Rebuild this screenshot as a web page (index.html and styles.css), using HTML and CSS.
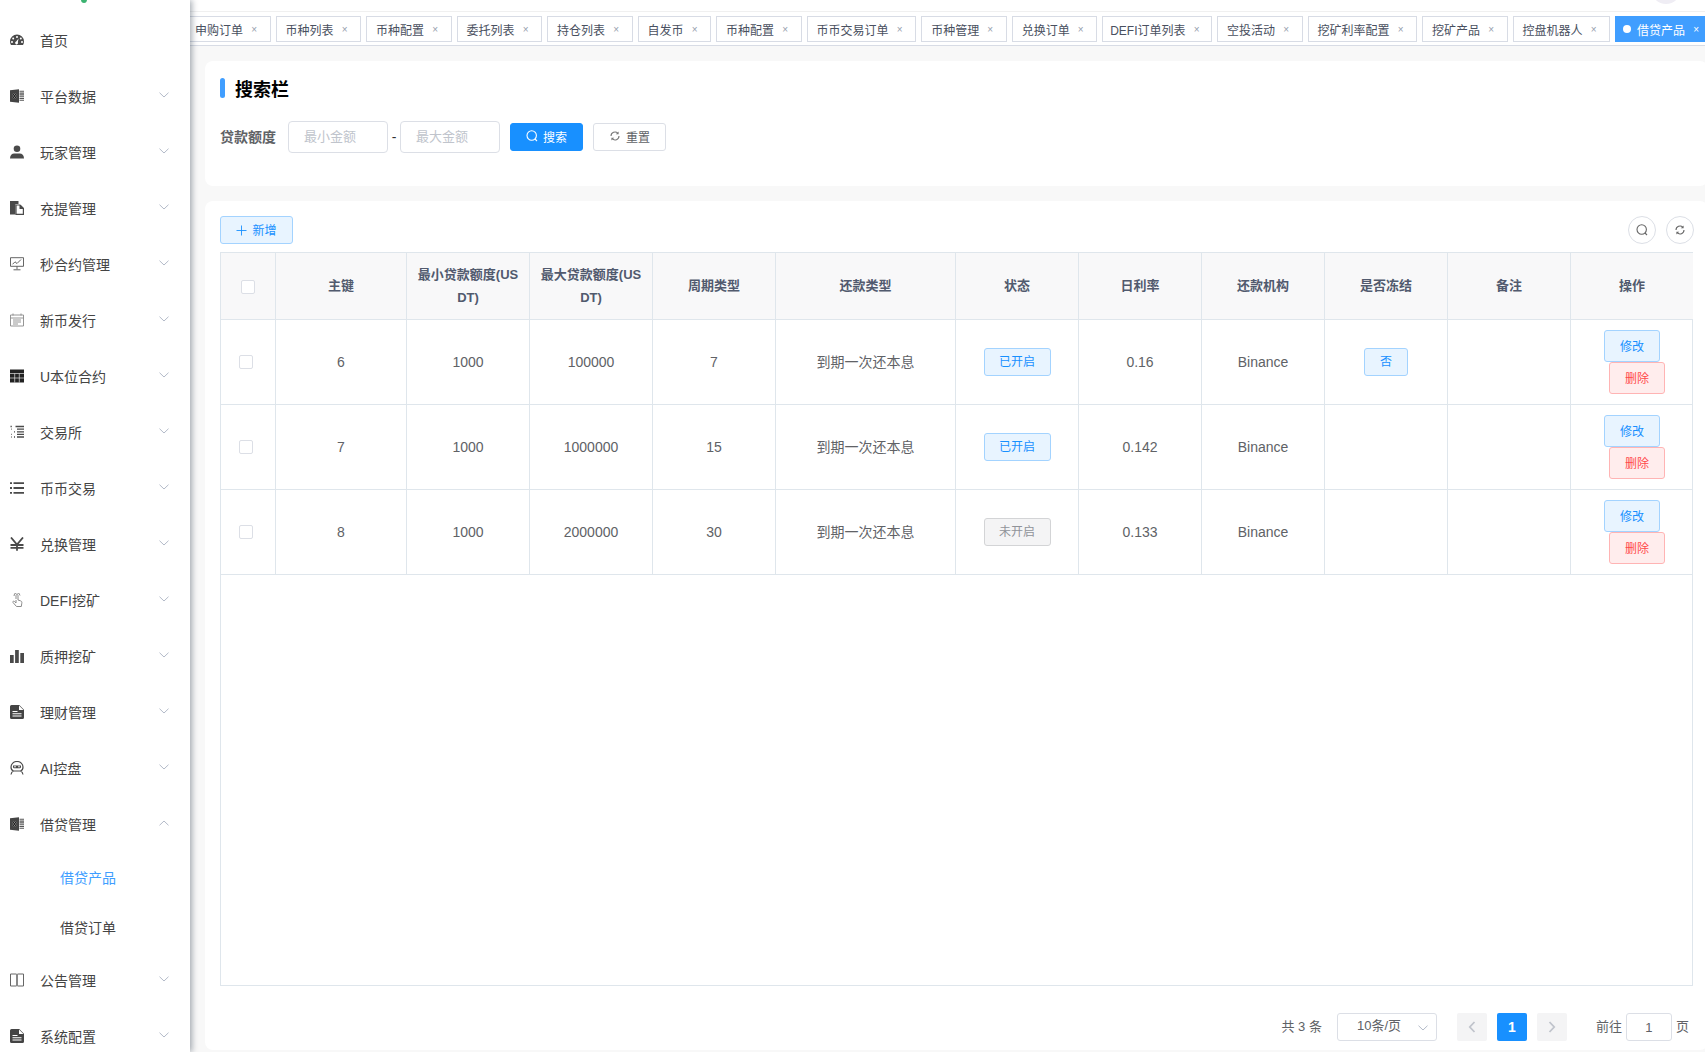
FILE: index.html
```html
<!DOCTYPE html>
<html lang="zh-CN">
<head>
    <meta charset="UTF-8">
    <meta name="viewport" content="width=device-width, initial-scale=1.0">
    <title>借贷产品</title>
    <link rel="stylesheet" href="styles.css">
</head>
<body>

    <!-- shared icons -->
    <svg class="defs" width="0" height="0">
        <symbol id="i-gauge" viewBox="0 0 14 14">
            <path fill="#4a4a4a" fill-rule="evenodd" d="M7 1.500a7 7 0 0 1 7 7c0 1.400-.4 2.600-1 3.500H1c-.6-.9-1-2.100-1-3.500a7 7 0 0 1 7-7zM7 3a1 1 0 1 0 0 2 1 1 0 0 0 0-2zM3.200 4.600a1 1 0 1 0 0 2 1 1 0 0 0 0-2zM10.800 4.600a1 1 0 1 0 0 2 1 1 0 0 0 0-2zM2 8a1 1 0 1 0 0 2 1 1 0 0 0 0-2zM12 8a1 1 0 1 0 0 2 1 1 0 0 0 0-2zM8.600 5.400 6.200 8.600a1.400 1.400 0 1 0 1.600.6z"/>
        </symbol>
        <symbol id="i-excel" viewBox="0 0 14 14">
            <path fill="#444" d="M0 1.300 9 .2v13.600l-9-1.100z"/>
            <path stroke="#a0a0a0" stroke-width="1.800" fill="none" d="M3 5 6 9M6 5 3 9"/>
            <path stroke="#111" stroke-width="1" fill="none" d="M3 5 6 9M6 5 3 9"/>
            <path stroke="#555" stroke-width="1.100" d="M9.500 2.300H14M9.500 4.100H14M9.500 5.900H14M9.500 7.700H14M9.500 9.500H14M9.500 11.300H14"/>
        </symbol>
        <symbol id="i-user" viewBox="0 0 14 14">
            <circle cx="7" cy="3.800" r="3.300" fill="#4a4a4a"/>
            <path fill="#4a4a4a" d="M0 13.500c0-3.200 2-5 4.200-5h5.600c2.200 0 4.200 1.800 4.200 5z"/>
        </symbol>
        <symbol id="i-docs" viewBox="0 0 14 14">
            <path fill="#4a4a4a" d="M0 0h8.500v3H5.500v10.500H0z"/>
            <path fill="#fff" stroke="#4a4a4a" stroke-width="1.200" d="M6 4h4l3.400 3.400v6H6z"/>
            <path fill="#4a4a4a" d="M9.500 4h1.200l3 3v1H9.500z"/>
        </symbol>
        <symbol id="i-screen" viewBox="0 0 14 14">
            <path fill="none" stroke="#555" stroke-width=".9" d="M.5.700h13v8.600H.5zM7 9.300v3M3.500 12.800h7M2.500 7.300l2.500-2.500 2 1.700 4-4"/>
        </symbol>
        <symbol id="i-cal" viewBox="0 0 14 14">
            <path fill="none" stroke="#8a8a8a" stroke-width=".9" d="M.5 2h13v11H.5zM.5 5h13M3 .5v2M11 .5v2M3 7h8M3 9h8M3 11h5"/>
        </symbol>
        <symbol id="i-grid" viewBox="0 0 14 14">
            <path fill="#222" d="M0 .5h14v13H0z"/>
            <path stroke="#fff" stroke-width=".6" d="M0 4.500h14M0 9h14M4.700 4.500v9M9.300 4.500v9"/>
        </symbol>
        <symbol id="i-listdash" viewBox="0 0 14 14">
            <path stroke="#4a4a4a" stroke-width="1.300" stroke-dasharray="1.300 1.300" d="M.5 1.500h2.500M4 6.800h1M4 12h1"/>
            <path stroke="#4a4a4a" stroke-width="1.300" d="M5.500 1.500H14M7 4.200h7M7 6.800h7M7 9.400h7M7 12h7"/>
            <path stroke="#888" stroke-width="1.300" d="M1 4.200h1M1 9.400h1M1 12h1"/>
        </symbol>
        <symbol id="i-list" viewBox="0 0 14 14">
            <path stroke="#4a4a4a" stroke-width="1.800" d="M0 2.200h2M3.500 2.200H14M0 7h2M3.500 7H14M0 11.800h2M3.500 11.800H14"/>
        </symbol>
        <symbol id="i-yen" viewBox="0 0 14 14">
            <path fill="none" stroke="#4a4a4a" stroke-width="1.800" d="M1 .5 7 7.500l6-7M7 7.500v6.300M.5 8h13M.5 10.800h13"/>
        </symbol>
        <symbol id="i-hand" viewBox="0 0 14 14">
            <path fill="none" stroke="#8c8c8c" stroke-width="1" d="M6 6V2.500a1 1 0 0 1 2 0V7l2.500.8c1.200.4 1.500 1.200 1.300 2.400l-.5 3.300H6.500L3 9.500c-.6-1 .6-1.800 1.500-1L6 10V7M4 3a3 3 0 0 1 6-.5"/>
        </symbol>
        <symbol id="i-bars" viewBox="0 0 14 14">
            <path fill="#4a4a4a" d="M0 6h3.700v8H0zM5.100 1h3.700v13H5.100zM10.300 4H14v10h-3.700z"/>
        </symbol>
        <symbol id="i-doc" viewBox="0 0 14 14">
            <path fill="#444" d="M1.500 0h7.800L14 4.700v7.800a1.500 1.500 0 0 1-1.500 1.500h-11A1.500 1.500 0 0 1 0 12.500v-11A1.500 1.500 0 0 1 1.500 0z"/>
            <path stroke="#fff" stroke-width="1.100" d="M2.500 6.500h5M2.500 8.800h9M2.500 11h9"/>
            <path fill="#fff" d="M9 .5V5h4.500z"/>
        </symbol>
        <symbol id="i-robot" viewBox="0 0 14 14">
            <path fill="none" stroke="#4a4a4a" stroke-width="1.200" d="M1 6a6 5.500 0 0 1 12 0c0 2-1 3.600-2.500 4H3.500C2 9.600 1 8 1 6zM1 13.500c.3-2 1-3 2.500-3.500M13 13.500c-.3-2-1-3-2.500-3.500"/>
            <path fill="#4a4a4a" d="M3 4.500h8v1.500a1.300 1.300 0 0 1-1.300 1.300H4.300A1.300 1.300 0 0 1 3 6z"/>
            <circle cx="5" cy="5.700" r=".8" fill="#fff"/><circle cx="9" cy="5.700" r=".8" fill="#fff"/>
        </symbol>
        <symbol id="i-book" viewBox="0 0 14 14">
            <path fill="none" stroke="#666" stroke-width="1" d="M.5 1h6v12h-6zM7.500 1h6v12h-6z"/>
            <path stroke="#aaa" stroke-width="1" d="M7 1v12"/>
        </symbol>
        <symbol id="i-down" viewBox="0 0 10 6">
            <path fill="none" stroke="#b3bac8" stroke-width="1" d="M.5.700 5 5l4.500-4.300"/>
        </symbol>
        <symbol id="i-search" viewBox="0 0 12 12">
            <circle cx="5.700" cy="5.500" r="4.700" fill="none" stroke="currentColor" stroke-width="1.100"/>
            <path stroke="currentColor" stroke-width="1.100" d="M9 9l2 2"/>
        </symbol>
        <symbol id="i-refresh" viewBox="0 0 12 12">
            <path fill="none" stroke="currentColor" stroke-width="1.100" d="M2 6a4 4 0 0 1 6.900-2.700M10 6a4 4 0 0 1-6.900 2.700"/>
            <path fill="currentColor" d="M9.600 1.500v2.800H6.800zM2.400 10.500V7.700h2.800z"/>
        </symbol>
        <symbol id="i-plus" viewBox="0 0 11 11">
            <path stroke="currentColor" stroke-width=".9" d="M5.500 .5v10M.5 5.500h10"/>
        </symbol>
        <symbol id="i-prev" viewBox="0 0 8 12">
            <path fill="none" stroke="#c0c4cc" stroke-width="1.800" d="M6.500 1 1.800 6l4.700 5"/>
        </symbol>
        <symbol id="i-next" viewBox="0 0 8 12">
            <path fill="none" stroke="#c0c4cc" stroke-width="1.800" d="M1.500 1 6.200 6l-4.700 5"/>
        </symbol>
    </svg>

    <div class="logo-tip"></div>
    <div class="avatar-tip"></div>

    <div class="app">
        <!-- menu -->
        <aside class="sidebar">
            <div class="menu-item"><svg class="ico"><use href="#i-gauge"/></svg><span>首页</span></div>
            <div class="menu-item"><svg class="ico"><use href="#i-excel"/></svg><span>平台数据</span><svg class="arrow"><use href="#i-down"/></svg></div>
            <div class="menu-item"><svg class="ico"><use href="#i-user"/></svg><span>玩家管理</span><svg class="arrow"><use href="#i-down"/></svg></div>
            <div class="menu-item"><svg class="ico"><use href="#i-docs"/></svg><span>充提管理</span><svg class="arrow"><use href="#i-down"/></svg></div>
            <div class="menu-item"><svg class="ico"><use href="#i-screen"/></svg><span>秒合约管理</span><svg class="arrow"><use href="#i-down"/></svg></div>
            <div class="menu-item"><svg class="ico"><use href="#i-cal"/></svg><span>新币发行</span><svg class="arrow"><use href="#i-down"/></svg></div>
            <div class="menu-item"><svg class="ico"><use href="#i-grid"/></svg><span>U本位合约</span><svg class="arrow"><use href="#i-down"/></svg></div>
            <div class="menu-item"><svg class="ico"><use href="#i-listdash"/></svg><span>交易所</span><svg class="arrow"><use href="#i-down"/></svg></div>
            <div class="menu-item"><svg class="ico"><use href="#i-list"/></svg><span>币币交易</span><svg class="arrow"><use href="#i-down"/></svg></div>
            <div class="menu-item"><svg class="ico"><use href="#i-yen"/></svg><span>兑换管理</span><svg class="arrow"><use href="#i-down"/></svg></div>
            <div class="menu-item"><svg class="ico"><use href="#i-hand"/></svg><span>DEFI挖矿</span><svg class="arrow"><use href="#i-down"/></svg></div>
            <div class="menu-item"><svg class="ico"><use href="#i-bars"/></svg><span>质押挖矿</span><svg class="arrow"><use href="#i-down"/></svg></div>
            <div class="menu-item"><svg class="ico"><use href="#i-doc"/></svg><span>理财管理</span><svg class="arrow"><use href="#i-down"/></svg></div>
            <div class="menu-item"><svg class="ico"><use href="#i-robot"/></svg><span>AI控盘</span><svg class="arrow"><use href="#i-down"/></svg></div>
            <div class="menu-item"><svg class="ico"><use href="#i-excel"/></svg><span>借贷管理</span><svg class="arrow arrow-up"><use href="#i-down"/></svg></div>
            <div class="sub-item active">借贷产品</div>
            <div class="sub-item">借贷订单</div>
            <div class="menu-item"><svg class="ico"><use href="#i-book"/></svg><span>公告管理</span><svg class="arrow"><use href="#i-down"/></svg></div>
            <div class="menu-item"><svg class="ico"><use href="#i-doc"/></svg><span>系统配置</span><svg class="arrow"><use href="#i-down"/></svg></div>
        </aside>

        <main class="main">
            <div class="navbar"></div>

            <!-- tags -->
            <div class="tabs">
                <div class="tab">申购订单<i>×</i></div>
                <div class="tab">币种列表<i>×</i></div>
                <div class="tab">币种配置<i>×</i></div>
                <div class="tab">委托列表<i>×</i></div>
                <div class="tab">持仓列表<i>×</i></div>
                <div class="tab">自发币<i>×</i></div>
                <div class="tab">币种配置<i>×</i></div>
                <div class="tab">币币交易订单<i>×</i></div>
                <div class="tab">币种管理<i>×</i></div>
                <div class="tab">兑换订单<i>×</i></div>
                <div class="tab tab-latin">DEFI订单列表<i>×</i></div>
                <div class="tab">空投活动<i>×</i></div>
                <div class="tab">挖矿利率配置<i>×</i></div>
                <div class="tab">挖矿产品<i>×</i></div>
                <div class="tab">控盘机器人<i>×</i></div>
                <div class="tab tab-active"><b></b>借贷产品<i>×</i></div>
            </div>

            <div class="content">
                <!-- search -->
                <section class="card card-search">
                    <h2 class="card-title">搜索栏</h2>
                    <div class="filter">
                        <label class="filter-label">贷款额度</label>
                        <input class="input" placeholder="最小金额">
                        <span class="dash">-</span>
                        <input class="input" placeholder="最大金额">
                        <button class="btn btn-primary"><svg class="btn-ico"><use href="#i-search"/></svg>搜索</button>
                        <button class="btn btn-plain"><svg class="btn-ico"><use href="#i-refresh"/></svg>重置</button>
                    </div>
                </section>

                <!-- list -->
                <section class="card card-list">
                    <div class="toolbar">
                        <button class="btn btn-light btn-add"><svg class="plus"><use href="#i-plus"/></svg>新增</button>
                        <div class="tools">
                            <span class="circle"><svg class="btn-ico"><use href="#i-search"/></svg></span>
                            <span class="circle"><svg class="btn-ico"><use href="#i-refresh"/></svg></span>
                        </div>
                    </div>

                    <div class="table-box">
                        <table>
                            <colgroup>
                                <col class="col-check"><col class="col-key"><col class="col-n"><col class="col-n"><col class="col-n"><col class="col-wide"><col class="col-n"><col class="col-n"><col class="col-n"><col class="col-n"><col class="col-n"><col class="col-last">
                            </colgroup>
                            <thead>
                                <tr>
                                    <th><span class="check check-head"></span></th>
                                    <th>主键</th>
                                    <th>最小贷款额度(USDT)</th>
                                    <th>最大贷款额度(USDT)</th>
                                    <th>周期类型</th>
                                    <th>还款类型</th>
                                    <th>状态</th>
                                    <th>日利率</th>
                                    <th>还款机构</th>
                                    <th>是否冻结</th>
                                    <th>备注</th>
                                    <th>操作</th>
                                </tr>
                            </thead>
                            <tbody>
                                <tr>
                                    <td class="td-lift"><span class="check"></span></td>
                                    <td>6</td><td>1000</td><td>100000</td><td>7</td>
                                    <td class="td-lift">到期一次还本息</td>
                                    <td><span class="tag">已开启</span></td>
                                    <td>0.16</td><td>Binance</td>
                                    <td><span class="tag tag-small">否</span></td>
                                    <td></td>
                                    <td><div class="ops"><button class="btn-op btn-light">修改</button><button class="btn-op btn-danger">删除</button></div></td>
                                </tr>
                                <tr>
                                    <td class="td-lift"><span class="check"></span></td>
                                    <td>7</td><td>1000</td><td>1000000</td><td>15</td>
                                    <td class="td-lift">到期一次还本息</td>
                                    <td><span class="tag">已开启</span></td>
                                    <td>0.142</td><td>Binance</td>
                                    <td></td>
                                    <td></td>
                                    <td><div class="ops"><button class="btn-op btn-light">修改</button><button class="btn-op btn-danger">删除</button></div></td>
                                </tr>
                                <tr>
                                    <td class="td-lift"><span class="check"></span></td>
                                    <td>8</td><td>1000</td><td>2000000</td><td>30</td>
                                    <td class="td-lift">到期一次还本息</td>
                                    <td><span class="tag tag-off">未开启</span></td>
                                    <td>0.133</td><td>Binance</td>
                                    <td></td>
                                    <td></td>
                                    <td><div class="ops"><button class="btn-op btn-light">修改</button><button class="btn-op btn-danger">删除</button></div></td>
                                </tr>
                            </tbody>
                        </table>
                    </div>

                    <!-- pager -->
                    <div class="pager">
                        <span class="total">共 3 条</span>
                        <div class="size">10条/页<svg class="size-arrow"><use href="#i-down"/></svg></div>
                        <span class="page page-off"><svg class="page-ico"><use href="#i-prev"/></svg></span>
                        <span class="page page-on">1</span>
                        <span class="page page-off"><svg class="page-ico"><use href="#i-next"/></svg></span>
                        <span class="goto">前往</span>
                        <input class="page-input" value="1">
                        <span class="goto-end">页</span>
                    </div>
                </section>
            </div>
        </main>
    </div>

</body>
</html>
```

FILE: styles.css
```css
* {
    box-sizing: border-box;
}
html, body {
    margin: 0;
    height: 100%;
    overflow: hidden;
}
body {
    font-family: "Liberation Sans", "Noto Sans CJK SC", sans-serif;
    font-size: 14px;
    color: #606266;
    background: #f8f8f8;
}
.defs {
    position: absolute;
}
.app {
    display: flex;
    height: 1052px;
}

/* sidebar */
.sidebar {
    flex: 0 0 190px;
    padding-top: 12px;
    background: #fff;
    box-shadow: 2px 0 6px rgba(0, 21, 41, 0.35);
    position: relative;
    z-index: 2;
    overflow: hidden;
}
.menu-item {
    display: flex;
    align-items: center;
    height: 56px;
    padding-left: 10px;
    color: #444;
}
.ico {
    width: 14px;
    height: 14px;
    margin-right: 16px;
    margin-top: -1px;
}
.arrow {
    width: 10px;
    height: 6px;
    margin-left: auto;
    margin-right: 21px;
    margin-top: -3px;
}
.arrow-up {
    transform: rotate(180deg);
}
.sub-item {
    height: 50px;
    line-height: 52px;
    padding-left: 60px;
    color: #444;
}
.sub-item.active {
    color: #409eff;
}
.logo-tip {
    position: absolute;
    left: 81px;
    top: -4px;
    width: 6px;
    height: 7px;
    border-radius: 50%;
    background: #3cb371;
    z-index: 3;
}
.avatar-tip {
    position: absolute;
    left: 1651px;
    top: -26px;
    width: 30px;
    height: 30px;
    border-radius: 50%;
    background: #efedf4;
    z-index: 3;
}

/* main */
.main {
    flex: 1;
    min-width: 0;
    overflow: hidden;
}
.navbar {
    height: 12px;
    background: #fff;
    border-bottom: 1px solid #f0f0f0;
}
.tabs {
    display: flex;
    align-items: flex-start;
    gap: 5px;
    height: 34px;
    padding-top: 4px;
    background: #fff;
    border-bottom: 1px solid #d8dce5;
    overflow: hidden;
}
.tab {
    flex: none;
    display: flex;
    align-items: center;
    height: 26px;
    padding: 0 10.5px 0 9px;
    border: 1px solid #d8dce5;
    background: #fff;
    color: #495060;
    font-size: 12px;
}
.tab:first-child {
    margin-left: -5px;
}
.tab-latin {
    padding: 0 9.5px 0 7px;
}
.tab i {
    width: 16px;
    text-align: right;
    font-style: normal;
    font-size: 10px;
    color: #97a0ad;
    padding-right: 2px;
}
.tab-active {
    background: #409eff;
    border-color: #409eff;
    color: #fff;
    padding: 0 4px 0 7px;
}
.tab-active b {
    width: 8px;
    height: 8px;
    margin-right: 6px;
    border-radius: 50%;
    background: #fff;
}
.tab-active i {
    color: #fff;
}

.content {
    width: 1503px;
    margin-left: 15px;
    padding-top: 15px;
}
.card {
    background: #fff;
    border-radius: 8px;
    padding: 15px;
}
.card-search {
    height: 125px;
    margin-bottom: 15px;
}
.card-list {
    height: 849px;
}
.card-title {
    margin: 2px 0 0;
    padding-left: 15px;
    height: 20px;
    line-height: 24px;
    font-size: 18px;
    color: #000;
    position: relative;
}
.card-title::before {
    content: '';
    position: absolute;
    left: 0;
    top: 0;
    width: 5px;
    height: 20px;
    border-radius: 3px;
    background: #409eff;
}

/* search form */
.filter {
    display: flex;
    align-items: center;
    margin-top: 23px;
}
.filter-label {
    width: 68px;
    padding-bottom: 3px;
    font-weight: bold;
}
.input {
    width: 100px;
    height: 32px;
    padding: 0 15px 2px;
    border: 1px solid #dcdfe6;
    border-radius: 4px;
    font-family: inherit;
    font-size: 13px;
    outline: none;
}
.input::placeholder {
    color: #c0c4cc;
}
.dash {
    width: 12px;
    text-align: center;
    color: #333;
}
.btn {
    display: flex;
    align-items: center;
    justify-content: center;
    width: 73px;
    height: 28px;
    padding: 0 0 2px;
    border-radius: 3px;
    font-family: inherit;
    font-size: 12px;
}
.btn-ico {
    width: 12px;
    height: 12px;
    margin-right: 5px;
}
.btn-primary {
    margin-left: 10px;
    border: 1px solid #1890ff;
    background: #1890ff;
    color: #fff;
}
.btn-plain {
    margin-left: 10px;
    border: 1px solid #dcdfe6;
    background: #fff;
    color: #606266;
}
.btn-plain .btn-ico {
    color: #777;
}
.btn-light {
    border: 1px solid #a3d3ff;
    background: #e8f4ff;
    color: #1890ff;
}
.plus {
    width: 11px;
    height: 11px;
    margin-right: 5px;
    margin-top: 2px;
}

/* list */
.toolbar {
    display: flex;
    justify-content: space-between;
    height: 36px;
}
.tools {
    display: flex;
    gap: 10px;
    margin-right: -1px;
}
.circle {
    display: flex;
    align-items: center;
    justify-content: center;
    width: 28px;
    height: 28px;
    border: 1px solid #dcdfe6;
    border-radius: 50%;
    color: #666;
}
.circle .btn-ico {
    margin: 0;
}
.table-box {
    height: 734px;
    border: 1px solid #dfe6ec;
}
table {
    width: 1472px;
    table-layout: fixed;
    border-collapse: separate;
    border-spacing: 0;
}
.col-check {
    width: 55px;
}
.col-key {
    width: 131px;
}
.col-n {
    width: 123px;
}
.col-wide {
    width: 180px;
}
.col-last {
    width: 122px;
}
th, td {
    padding: 0 10px;
    text-align: center;
    border-right: 1px solid #dfe6ec;
    border-bottom: 1px solid #dfe6ec;
}
th {
    height: 67px;
    padding-bottom: 1px;
    line-height: 23px;
    font-size: 13px;
    color: #515a6e;
    background: #f8f8f9;
    word-break: break-all;
}
td {
    height: 85px;
}
td.td-lift {
    padding-bottom: 2px;
}
th:last-child, td:last-child {
    border-right: 0;
}
.check {
    display: inline-block;
    width: 14px;
    height: 14px;
    margin-right: 4px;
    vertical-align: middle;
    border: 1px solid #dcdfe6;
    border-radius: 2px;
    background: #fff;
}
.check-head {
    margin-right: 0;
}
.tag {
    display: inline-block;
    width: 67px;
    height: 28px;
    line-height: 26px;
    border: 1px solid #a3d3ff;
    border-radius: 3px;
    background: #e8f4ff;
    color: #1890ff;
    font-size: 12px;
    vertical-align: middle;
}
.tag-small {
    width: 44px;
}
.tag-off {
    border-color: #d3d4d6;
    background: #f4f4f5;
    color: #909399;
}
.ops {
    display: flex;
    flex-direction: column;
    align-items: center;
}
.btn-op {
    width: 56px;
    height: 32px;
    padding: 0 0 2px;
    border-radius: 3px;
    font-family: inherit;
    font-size: 12px;
}
.btn-danger {
    margin-left: 10px;
    border: 1px solid #ffb4b4;
    background: #ffeded;
    color: #ff4949;
}

/* pager */
.pager {
    display: flex;
    align-items: center;
    justify-content: flex-end;
    height: 28px;
    margin-top: 27px;
    font-size: 13px;
}
.total {
    margin-right: 15px;
    padding-bottom: 3px;
}
.size {
    position: relative;
    width: 100px;
    height: 28px;
    line-height: 24px;
    padding-left: 19px;
    border: 1px solid #dcdfe6;
    border-radius: 3px;
    margin-right: 20px;
}
.size-arrow {
    position: absolute;
    right: 8px;
    top: 11px;
    width: 10px;
    height: 6px;
}
.page {
    display: flex;
    align-items: center;
    justify-content: center;
    width: 30px;
    height: 28px;
    margin-right: 10px;
    border-radius: 2px;
    font-size: 14px;
    font-weight: bold;
}
.page-ico {
    width: 8px;
    height: 12px;
}
.page-off {
    background: #f4f4f5;
}
.page-on {
    background: #1890ff;
    color: #fff;
}
.goto {
    margin-left: 19px;
    margin-right: 4px;
    padding-bottom: 3px;
}
.page-input {
    width: 46px;
    height: 28px;
    border: 1px solid #dcdfe6;
    border-radius: 3px;
    text-align: center;
    font-family: inherit;
    font-size: 13px;
    color: #606266;
    outline: none;
}
.goto-end {
    margin-left: 4px;
    margin-right: 4px;
    padding-bottom: 3px;
}
```
